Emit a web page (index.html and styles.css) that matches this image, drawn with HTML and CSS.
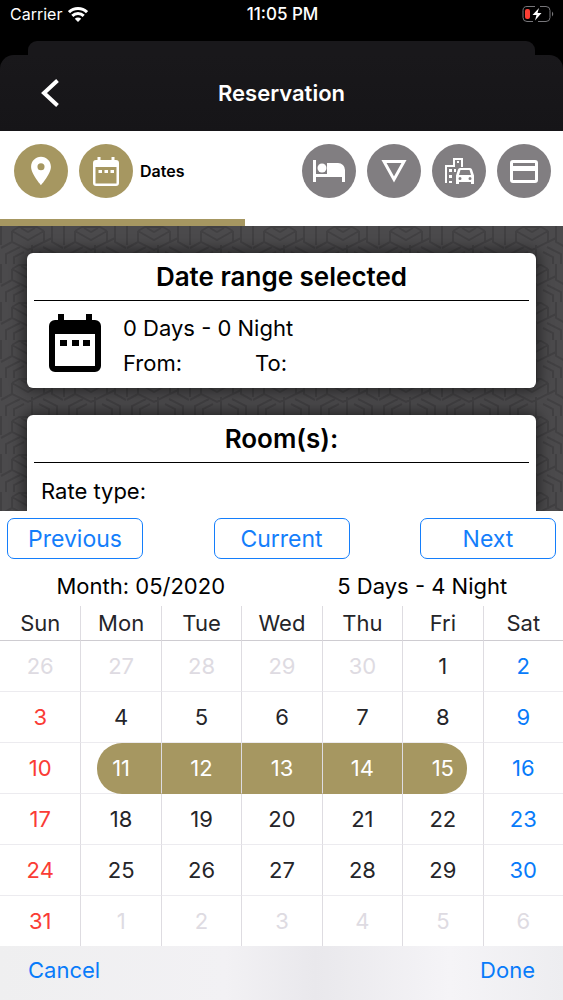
FILE: index.html
```
<!DOCTYPE html>
<html lang="en">
<head>
<meta charset="utf-8">
<meta name="viewport" content="width=device-width, initial-scale=1">
<title>Reservation</title>
<link rel="stylesheet" href="styles.css">
</head>
<body>
<div class="app">
  <div class="status">
    <div class="carrier"><span>Carrier</span>
      <svg width="20" height="15" viewBox="0 0 20 15" fill="none" stroke="#fff" stroke-width="3"><path d="M1 5.2a13 13 0 0 1 18 0M4.3 8.8a8.2 8.2 0 0 1 11.4 0"/><path d="M10 15 6.8 11.7a4.600 4.600 0 0 1 6.400 0z" fill="#fff" stroke="none"/></svg>
    </div>
    <div class="clock">11:05 PM</div>
    <svg class="battery" width="34" height="18" viewBox="0 0 34 18"><path d="M14 1.500H6a4 4 0 0 0-4 4v7a4 4 0 0 0 4 4h6M19 1.500h6a4 4 0 0 1 4 4v7a4 4 0 0 1-4 4h-8" fill="none" stroke="#77767a"/><rect x="4" y="4" width="5" height="10" rx="2" fill="#fa3e34"/><path d="M18 3 11.500 10h4L14 15.500 20.500 8h-4z" fill="#fff"/><path d="M31 6.500q2.500 2.500 0 5z" fill="#77767a"/></svg>
  </div>

  <header class="head">
    <div class="sheet-edge"></div>
    <div class="bar">
      <button class="back" type="button" aria-label="Back"><svg width="20" height="28" viewBox="0 0 20 28" fill="none" stroke="#fff" stroke-width="4"><path d="M17.500 1.500 4 14l13.500 12.500"/></svg></button>
      <h1>Reservation</h1>
    </div>
  </header>

  <nav class="steps" aria-label="Steps">
    <button class="step done" type="button" aria-label="Location"><svg width="34" height="34" viewBox="0 0 24 24" fill="#fff"><path d="M12 2C8.130 2 5 5.130 5 9c0 5.250 7 13 7 13s7-7.750 7-13c0-3.870-3.130-7-7-7zm0 9.500a2.500 2.500 0 1 1 0-5 2.500 2.500 0 0 1 0 5z"/></svg></button>
    <button class="step done" type="button" aria-labelledby="dates"><svg width="26" height="29" viewBox="0 0 52 58" fill="#fff"><path fill-rule="evenodd" d="M9 0h6v6h22V0h6v6h3a6 6 0 0 1 6 6v40a6 6 0 0 1-6 6H6a6 6 0 0 1-6-6V12a6 6 0 0 1 6-6h3zM5 20v33h42V20z"/><path d="M11 26h7v6h-7zM23 26h7v6h-7zM35 26h7v6h-7z"/></svg></button>
    <span class="step-name" id="dates">Dates</span>
    <button class="step" type="button" aria-label="Rooms"><svg width="32" height="23" viewBox="0 0 32 23" fill="#fff"><path d="M0 0h3v14h11V3h11a7 7 0 0 1 7 7v12h-3v-5H3v5H0z"/><circle cx="9" cy="8" r="4.500"/></svg></button>
    <button class="step" type="button" aria-label="Extras"><svg width="28" height="28" viewBox="0 0 28 28" fill="none" stroke="#fff" stroke-width="3"><path d="M4 4.500h20L14 22.500z"/></svg></button>
    <button class="step" type="button" aria-label="Transport"><svg width="30" height="28" viewBox="0 0 30 28" fill="#fff"><path d="M1 8h8V1h10v9h-2V3h-6v7H3v16H1z"/><path d="M13 4h2v2h-2zM5 12h3v3H5zM5 18h3v3H5zM5 24h3v2H5zM10 12h2v3h-2z"/><path fill-rule="evenodd" d="M16 11h10q1.500 0 2 1.500l2 6V27h-3v-2H15v2h-3v-8.500l2-6q.5-1.500 2-1.500zm.5 2-1.500 5h12l-1.500-5zM16 20a1.500 1.500 0 1 0 0 3 1.500 1.500 0 0 0 0-3zm10 0a1.500 1.500 0 1 0 0 3 1.500 1.500 0 0 0 0-3z"/></svg></button>
    <button class="step" type="button" aria-label="Payment"><svg width="28" height="23" viewBox="0 0 28 23" fill="#fff"><path fill-rule="evenodd" d="M3 0h22a3 3 0 0 1 3 3v17a3 3 0 0 1-3 3H3a3 3 0 0 1-3-3V3a3 3 0 0 1 3-3zm0 3v3h22V3zm0 8v9h22v-9z"/></svg></button>
    <div class="progress"></div>
  </nav>

  <main class="content">
    <svg class="pattern" width="100%" height="100%" aria-hidden="true">
      <defs>
        <pattern id="weave" width="63" height="38" patternUnits="userSpaceOnUse">
          <g fill="none" stroke="#414042" stroke-width="2"><path d="M1 0v19M32 19v19M12 5l7-4h18l7 4M12 5v11l16 8 16-8V5M12 5l16 9 16-9M21 2l7 4 7-4M52 0v16l11 6M1 22l11-6M44 16l8-4M6 38V28l14-7M57 38V28L43 21M14 38v-7l10-5M49 38v-7l-10-5"/></g>
        </pattern>
      </defs>
      <rect width="100%" height="100%" fill="url(#weave)"/>
    </svg>
    <section class="card">
      <h2>Date range selected</h2>
      <div class="range">
        <svg width="52" height="58" viewBox="0 0 52 58"><path fill-rule="evenodd" d="M9 0h6v6h22V0h6v6h3a6 6 0 0 1 6 6v40a6 6 0 0 1-6 6H6a6 6 0 0 1-6-6V12a6 6 0 0 1 6-6h3zM6 20v32h40V20z"/><path d="M11 26h7v6h-7zM23 26h7v6h-7zM34 26h7v6h-7z"/></svg>
        <div class="range-text">
          <p>0 Days - 0 Night</p>
          <p class="ends"><span>From:</span><span>To:</span></p>
        </div>
      </div>
    </section>
    <section class="card last">
      <h2>Room(s):</h2>
      <p class="rate">Rate type:</p>
    </section>
  </main>

  <section class="picker" aria-label="Date picker">
    <div class="jumps">
      <button type="button">Previous</button>
      <button type="button">Current</button>
      <button type="button">Next</button>
    </div>
    <div class="summary"><span>Month: 05/2020</span><span>5 Days - 4 Night</span></div>
    <table class="calendar">
      <thead><tr><th>Sun</th><th>Mon</th><th>Tue</th><th>Wed</th><th>Thu</th><th>Fri</th><th>Sat</th></tr></thead>
      <tbody>
        <tr><td class="out">26</td><td class="out">27</td><td class="out">28</td><td class="out">29</td><td class="out">30</td><td>1</td><td>2</td></tr>
        <tr><td>3</td><td>4</td><td>5</td><td>6</td><td>7</td><td>8</td><td>9</td></tr>
        <tr><td>10</td><td class="sel first"><span>11</span></td><td class="sel">12</td><td class="sel">13</td><td class="sel">14</td><td class="sel end"><span>15</span></td><td>16</td></tr>
        <tr><td>17</td><td>18</td><td>19</td><td>20</td><td>21</td><td>22</td><td>23</td></tr>
        <tr><td>24</td><td>25</td><td>26</td><td>27</td><td>28</td><td>29</td><td>30</td></tr>
        <tr><td>31</td><td class="out">1</td><td class="out">2</td><td class="out">3</td><td class="out">4</td><td class="out">5</td><td class="out">6</td></tr>
      </tbody>
    </table>
  </section>
  <footer class="actions"><button type="button">Cancel</button><button type="button">Done</button></footer>
</div>
</body>
</html>
```
FILE: styles.css
```
* { box-sizing: border-box; }
body { margin: 0; background: #000; color: #000; font-family: Inter, "Liberation Sans", sans-serif; font-size: 22px; line-height: 28px; }
button { font: inherit; background: none; border: 0; padding: 0; cursor: pointer; }
svg { display: block; flex: none; }
h1, h2, p { margin: 0; }
.app { display: flex; flex-direction: column; min-height: 100vh; }

.status { display: grid; grid-template-columns: 1fr auto 1fr; align-items: center; height: 28px; padding: 0 8px 0 10px; color: #fff; font-size: 16px; line-height: 20px; }
.carrier { display: flex; align-items: center; gap: 6px; }
.clock { font-size: 17px; font-weight: 500; }
.battery { justify-self: end; }

.head { padding-top: 13px; color: #fff; }
.sheet-edge { height: 14px; margin: 0 28px; border-radius: 9px 9px 0 0; background: #19181b; }
.bar { display: grid; grid-template-columns: 60px 1fr 60px; align-items: center; height: 76px; border-radius: 14px 14px 0 0; background: linear-gradient(#19181b, #161518); }
.back { justify-self: end; }
h1 { text-align: center; font-size: 22px; font-weight: 600; }

.steps { position: relative; display: flex; align-items: flex-start; gap: 11px; height: 95px; padding: 13px 12px 0 14px; background: #fff; }
.step { display: flex; align-items: center; justify-content: center; width: 54px; height: 54px; border-radius: 50%; background: #817e81; flex: none; }
.done { background: #a69761; }
.step-name { flex: 1; margin-left: -4px; line-height: 54px; font-size: 16px; font-weight: 600; }
.progress { position: absolute; left: 0; bottom: 0; width: 43.5%; height: 7px; background: #a69761; }

.content { position: relative; flex: 1 0 auto; display: flex; flex-direction: column; gap: 27px; padding: 27px 27px 0; background: #4b4a4c; overflow: hidden; }
.pattern { position: absolute; inset: 0; }
.card { position: relative; padding: 6px 7px 10px; border-radius: 6px; background: #fff; box-shadow: 0 0 14px 3px rgba(0, 0, 0, .5); }
.last { flex: 1; border-radius: 6px 6px 0 0; padding-bottom: 0; }
h2 { padding: 2px 0 7px; border-bottom: 1px solid #000; text-align: center; font-size: 26px; line-height: 32px; font-weight: 600; }
.range { display: flex; gap: 22px; padding: 13px 0 0 15px; }
.range-text { display: grid; gap: 6px; }
.range-text p { line-height: 29px; }
.ends { display: grid; grid-template-columns: 132px auto; }
.rate { padding: 14px 7px 4px; }

.picker { background: #fff; }
.jumps { display: flex; justify-content: space-between; padding: 7px 7px 0; }
.jumps button { width: 136px; height: 41px; border: 1px solid #147efb; border-radius: 7px; color: #147efb; font-size: 23px; }
.summary { display: grid; grid-template-columns: 1fr 1fr; padding-top: 13px; text-align: center; }
.calendar { width: 100%; margin-top: 6px; table-layout: fixed; border-collapse: separate; border-spacing: 0; color: #252529; }
.calendar th, .calendar td { padding: 0; text-align: center; font-weight: 400; }
.calendar th { height: 35px; border-bottom: 1px solid #ceccd1; }
.calendar td { height: 51px; border-bottom: 1px solid #ecebef; }
.calendar th + th, .calendar td + td { border-left: 1px solid #dedce1; }
.calendar tr:last-child td { height: 50px; border-bottom: 0; }
.calendar td:first-child { color: #fa3c35; }
.calendar td:last-child { color: #087bfa; }
.calendar td.out { color: #dedbe2; }
.calendar .sel { background: #a69761; color: #fff; border-bottom-color: #a69761; }
.calendar .first, .calendar .end { background: none; border-bottom-color: #ecebef; }
.first span, .end span { display: flex; align-items: center; justify-content: center; height: 51px; margin-bottom: -1px; padding-bottom: 1px; background: #a69761; }
.first span { margin-left: 20%; padding-right: 20%; border-radius: 25px 0 0 25px; }
.end span { margin-right: 20%; padding-left: 20%; border-radius: 0 25px 25px 0; }

.actions { display: flex; flex: none; align-items: center; justify-content: space-between; height: 54px; padding: 0 28px 6px; background: linear-gradient(90deg, #efeff0, #f2f1f4 40%, #e9e8ec 56%, #f5f4f7 80%, #ededf0); }
.actions button { color: #087bfa; }
```
